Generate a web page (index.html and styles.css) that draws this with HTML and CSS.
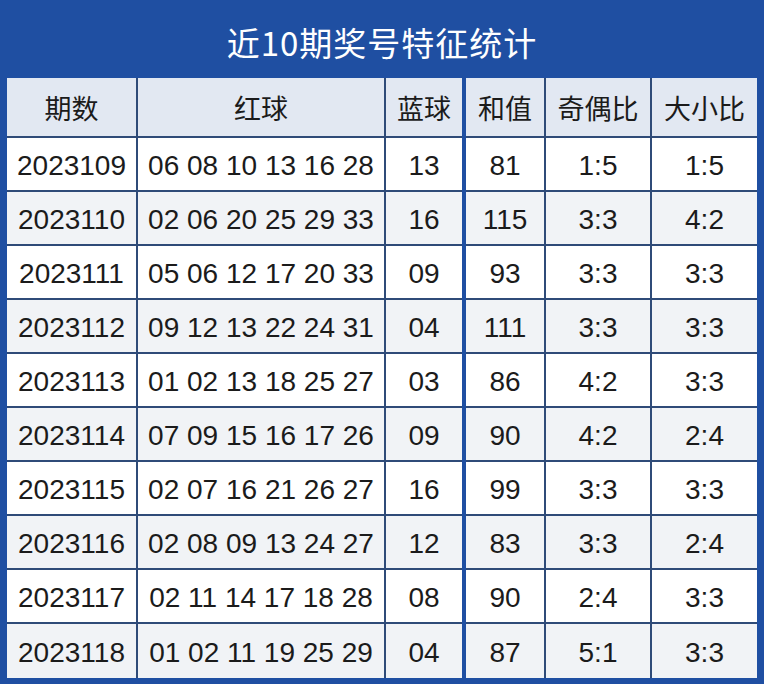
FILE: index.html
```html
<!DOCTYPE html>
<html lang="zh">
<head>
<meta charset="utf-8">
<title>近10期奖号特征统计</title>
<link rel="stylesheet" href="styles.css">
</head>
<body>
<div class="frame">
  <div class="title">近10期奖号特征统计</div>
  <table class="stats">
    <colgroup>
      <col class="c1"><col class="c2"><col class="c3"><col class="c4"><col class="c5"><col class="c6">
    </colgroup>
    <thead>
      <tr><th>期数</th><th>红球</th><th class="split">蓝球</th><th>和值</th><th>奇偶比</th><th>大小比</th></tr>
    </thead>
    <tbody>
      <tr><td>2023109</td><td>06 08 10 13 16 28</td><td class="split">13</td><td>81</td><td>1:5</td><td>1:5</td></tr>
      <tr><td>2023110</td><td>02 06 20 25 29 33</td><td class="split">16</td><td>115</td><td>3:3</td><td>4:2</td></tr>
      <tr><td>2023111</td><td>05 06 12 17 20 33</td><td class="split">09</td><td>93</td><td>3:3</td><td>3:3</td></tr>
      <tr><td>2023112</td><td>09 12 13 22 24 31</td><td class="split">04</td><td>111</td><td>3:3</td><td>3:3</td></tr>
      <tr><td>2023113</td><td>01 02 13 18 25 27</td><td class="split">03</td><td>86</td><td>4:2</td><td>3:3</td></tr>
      <tr><td>2023114</td><td>07 09 15 16 17 26</td><td class="split">09</td><td>90</td><td>4:2</td><td>2:4</td></tr>
      <tr><td>2023115</td><td>02 07 16 21 26 27</td><td class="split">16</td><td>99</td><td>3:3</td><td>3:3</td></tr>
      <tr><td>2023116</td><td>02 08 09 13 24 27</td><td class="split">12</td><td>83</td><td>3:3</td><td>2:4</td></tr>
      <tr><td>2023117</td><td>02 11 14 17 18 28</td><td class="split">08</td><td>90</td><td>2:4</td><td>3:3</td></tr>
      <tr><td>2023118</td><td>01 02 11 19 25 29</td><td class="split">04</td><td>87</td><td>5:1</td><td>3:3</td></tr>
    </tbody>
  </table>
</div>
</body>
</html>
```
FILE: styles.css
```css
html, body {
  margin: 0;
  padding: 0;
  background: #ffffff;
}
.frame {
  width: 764px;
  box-sizing: border-box;
  background: #1f4fa2;
  padding: 0 7px 6px 7px;
}
.title {
  height: 78px;
  display: flex;
  align-items: center;
  justify-content: center;
  color: #ffffff;
  font-family: "Noto Sans CJK SC", "Noto Sans", sans-serif;
  font-size: 33px;
  letter-spacing: 1px;
  padding-top: 6px;
  box-sizing: border-box;
}
.stats {
  width: 750px;
  table-layout: fixed;
  border-collapse: collapse;
  font-family: "Liberation Sans", Arial, "Noto Sans CJK SC", sans-serif;
  color: #1b1b1b;
}
.c1 { width: 130px; }
.c2 { width: 248px; }
.c3 { width: 79px; }
.c4 { width: 81px; }
.c5 { width: 106px; }
.c6 { width: 106px; }
.stats th, .stats td {
  padding: 0;
  text-align: center;
  border-right: 2px solid #2f4b78;
  border-bottom: 2px solid #2f4b78;
}
.stats th:last-child, .stats td:last-child {
  border-right: none;
}
.stats tbody tr:last-child td {
  border-bottom: none;
  height: 51px;
}
.stats th {
  height: 58px;
  background: #e2e8f2;
  font-family: "Noto Sans CJK SC", sans-serif;
  font-weight: normal;
  font-size: 27px;
}
.stats td {
  height: 49px;
  font-size: 28px;
  padding-top: 3px;
  background: #ffffff;
}
.stats tbody tr:nth-child(even) td {
  background: #f1f3f6;
}
.stats .split {
  border-right: 4px solid #1f4fa2;
}
```
